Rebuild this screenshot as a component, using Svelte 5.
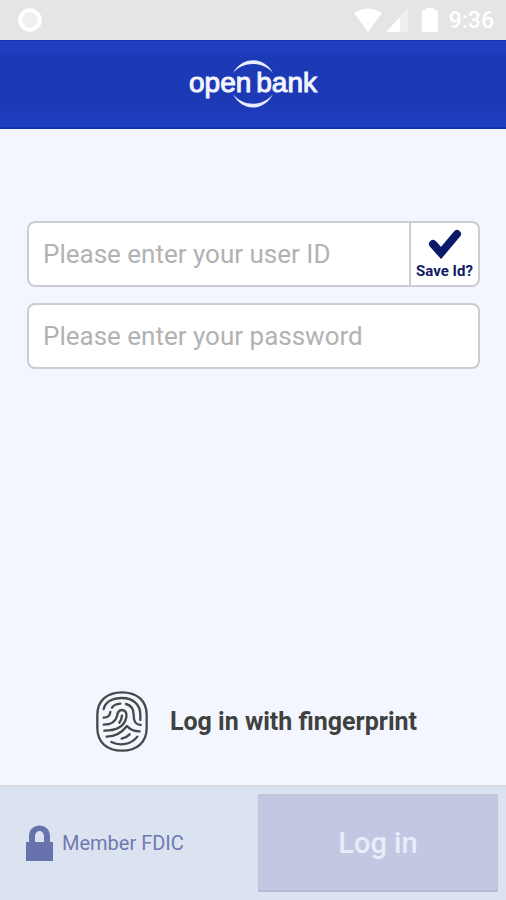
<script lang="ts">
  let userId = $state("");
  let password = $state("");
  let saveId = $state(true);

  const ready = $derived(userId.length > 0 && password.length > 0);

  function submit(e: SubmitEvent) {
    e.preventDefault();
  }
</script>

<svelte:head>
  <title>open bank</title>
</svelte:head>

<form class="screen" onsubmit={submit}>
  <div class="status">
    <svg class="dot" viewBox="0 0 24 24" aria-hidden="true">
      <circle cx="12" cy="12" r="9.8" />
    </svg>
    <div class="indicators">
      <svg class="wifi" viewBox="0 0 28 24" aria-hidden="true">
        <path d="M0 5 Q14 -4 28 5 L14 24Z" />
      </svg>
      <svg class="signal" viewBox="0 0 22 24" aria-hidden="true">
        <path class="faint" d="M14 8 L22 0 V24 H14Z" />
        <path d="M0 24 L14 9 V24Z" />
      </svg>
      <svg class="battery" viewBox="0 0 16 24" aria-hidden="true">
        <path d="M4 0 H12 V2 H14 Q16 2 16 4 V24 H0 V4 Q0 2 2 2 H4Z" />
      </svg>
      <span class="time">9:36</span>
    </div>
  </div>

  <header>
    <h1 class="logo">
      <svg viewBox="0 0 48 50" aria-hidden="true">
        <path d="M4 14 C13 -3 35 -3 44 14 C34 2 14 2 4 14Z" />
        <path d="M4 35 C13 53 35 53 44 35 C34 48 14 48 4 35Z" />
      </svg>
      <span>open</span><span>bank</span>
    </h1>
  </header>

  <main>
    <div class="fields">
      <div class="field">
        <input type="text" placeholder="Please enter your user ID" aria-label="User ID" bind:value={userId} />
        <label class="save">
          <input type="checkbox" bind:checked={saveId} />
          <svg class:off={!saveId} viewBox="0 0 34 30" aria-hidden="true">
            <path d="M5 15 L13 24 L29 5" />
          </svg>
          <span>Save Id?</span>
        </label>
      </div>
      <div class="field">
        <input type="password" placeholder="Please enter your password" aria-label="Password" bind:value={password} />
      </div>
    </div>

    <button type="button" class="fingerprint">
      <svg viewBox="8 10 156 183" aria-hidden="true">
        <path d="M12 82 C12 38 42 14 86 14 S160 38 160 82 V121 C160 165 130 189 86 189 S12 165 12 121Z" />
        <path d="M31 64 C36 42 58 31 86 31 C120 31 141 51 141 82 V97" />
        <path d="M31 90 C45 90 50 84 51 73" />
        <path d="M56 60 C61 52 69 49 81 48" />
        <path d="M98 49 C114 53 121 66 121 82 C121 102 126 111 142 112" />
        <path d="M31 111 C54 111 67 103 71 85 C73 72 77 67 86 67 C97 67 101 77 99 89 C94 115 73 129 33 129" />
        <path d="M86 84 C85 94 82 100 78 105" />
        <path d="M40 147 C69 147 86 134 101 115 C110 126 122 131 139 131" />
        <path d="M54 163 C80 176 114 171 132 147" />
        <path d="M85 153 C95 151 102 147 109 140" />
      </svg>
      <span>Log in with fingerprint</span>
    </button>
  </main>

  <footer>
    <div class="member">
      <svg viewBox="0 0 27 36" aria-hidden="true">
        <path d="M0 17 H3 V11 C3 -3 24 -3 24 11 V17 H27 V36 H0Z M9 17 H18 V12 C18 4 9 4 9 12Z" fill-rule="evenodd" />
      </svg>
      <span>Member FDIC</span>
    </div>
    <button type="submit" class="login" class:ready>Log in</button>
  </footer>
</form>

<style>
  :global(body) { margin: 0; background: #f3f6ff; }

  .screen {
    display: flex; flex-direction: column; min-height: 100vh;
    background: #f3f6ff; font-family: Roboto, "Noto Sans", sans-serif;
  }
  button, input { font: inherit; }

  .status {
    display: flex; align-items: center; justify-content: space-between;
    height: 40px; padding: 0 12px 0 18px; background: #e5e5e5;
  }
  .dot { width: 24px; height: 24px; fill: #f0f0f0; stroke: #fff; stroke-width: 4; }
  .indicators { display: flex; align-items: center; fill: #fff; }
  .indicators svg { height: 24px; }
  .wifi { width: 28px; margin-right: 4px; }
  .signal { width: 22px; margin-right: 14px; }
  .battery { width: 16px; margin-right: 11px; }
  .faint { fill: #efefef; }
  .time { color: #fff; font-size: 23px; font-weight: 500; }

  header {
    display: flex; align-items: center; justify-content: center;
    box-sizing: border-box; height: 89px;
    background: linear-gradient(#2140c6, #1c39b6 20%, #1c39b6 75%, #203fc4);
    border-top: 1px solid #1834ae; border-bottom: 2px solid #1230a9;
  }
  .logo {
    position: relative; display: flex; gap: 5px; margin: 0; padding-bottom: 2px;
    color: #f3f6ff; font: 400 28px/32px "Liberation Sans", Arial, sans-serif;
    -webkit-text-stroke: 1px #f3f6ff;
  }
  .logo svg {
    position: absolute; left: 50%; top: 50%; width: 48px; height: 50px;
    transform: translate(-50%, -50%); fill: #e8edff;
  }

  main {
    display: flex; flex: 1; flex-direction: column; align-items: center;
    justify-content: space-between; padding: 92px 26px 33px 27px;
  }
  .fields { display: flex; flex-direction: column; gap: 16px; width: 100%; }
  .field {
    display: flex; box-sizing: border-box; height: 66px; overflow: hidden;
    background: #fff; border: 2px solid #cbcdd0; border-radius: 8px;
  }
  .field > input {
    flex: 1; min-width: 0; padding: 0 14px; border: 0; outline: 0;
    background: none; color: #444; font-size: 26px;
  }
  .field > input::placeholder { color: #b2b2b2; opacity: 1; }
  .save {
    position: relative; display: flex; flex-direction: column; align-items: center;
    width: 67px; padding-top: 6px; border-left: 2px solid #cbcdd0;
    color: #101b66; font-size: 15px; line-height: 16px; font-weight: 700;
    cursor: pointer; white-space: nowrap;
  }
  .save input { position: absolute; inset: 0; width: 100%; height: 100%; margin: 0; opacity: 0; }
  .save svg {
    width: 34px; height: 30px; margin-bottom: 4px; fill: none; stroke: #0b1a68;
    stroke-width: 8; stroke-linecap: round;
  }
  .save svg.off { opacity: 0.2; }

  .fingerprint {
    display: flex; align-items: center; gap: 22px; padding: 0 0 0 6px;
    border: 0; background: none; color: #404040;
    font-size: 25px; font-weight: 700; cursor: pointer;
  }
  .fingerprint svg {
    width: 52px; height: 61px; fill: none; stroke: #484848;
    stroke-width: 7; stroke-linecap: round; stroke-linejoin: round;
  }

  footer {
    display: flex; box-sizing: border-box; height: 115px;
    padding: 7px 8px 8px; background: #dce3f0; border-top: 2px solid #d7dae3;
  }
  .member {
    display: flex; flex: 1; align-items: center; gap: 9px; padding-left: 18px;
    color: #7079b2; font-size: 20px;
  }
  .member svg { width: 27px; height: 36px; fill: #6873ae; }
  .login {
    box-sizing: border-box; width: 49%; height: 98px; padding: 0;
    background: #c3c7e2; border: 1px solid #bcc4da; border-bottom: 2px solid #b5bad9;
    color: #e8edfb; font-size: 29px; font-weight: 500; cursor: pointer;
  }
  .login.ready { background: #1c39b6; color: #fff; }
</style>
